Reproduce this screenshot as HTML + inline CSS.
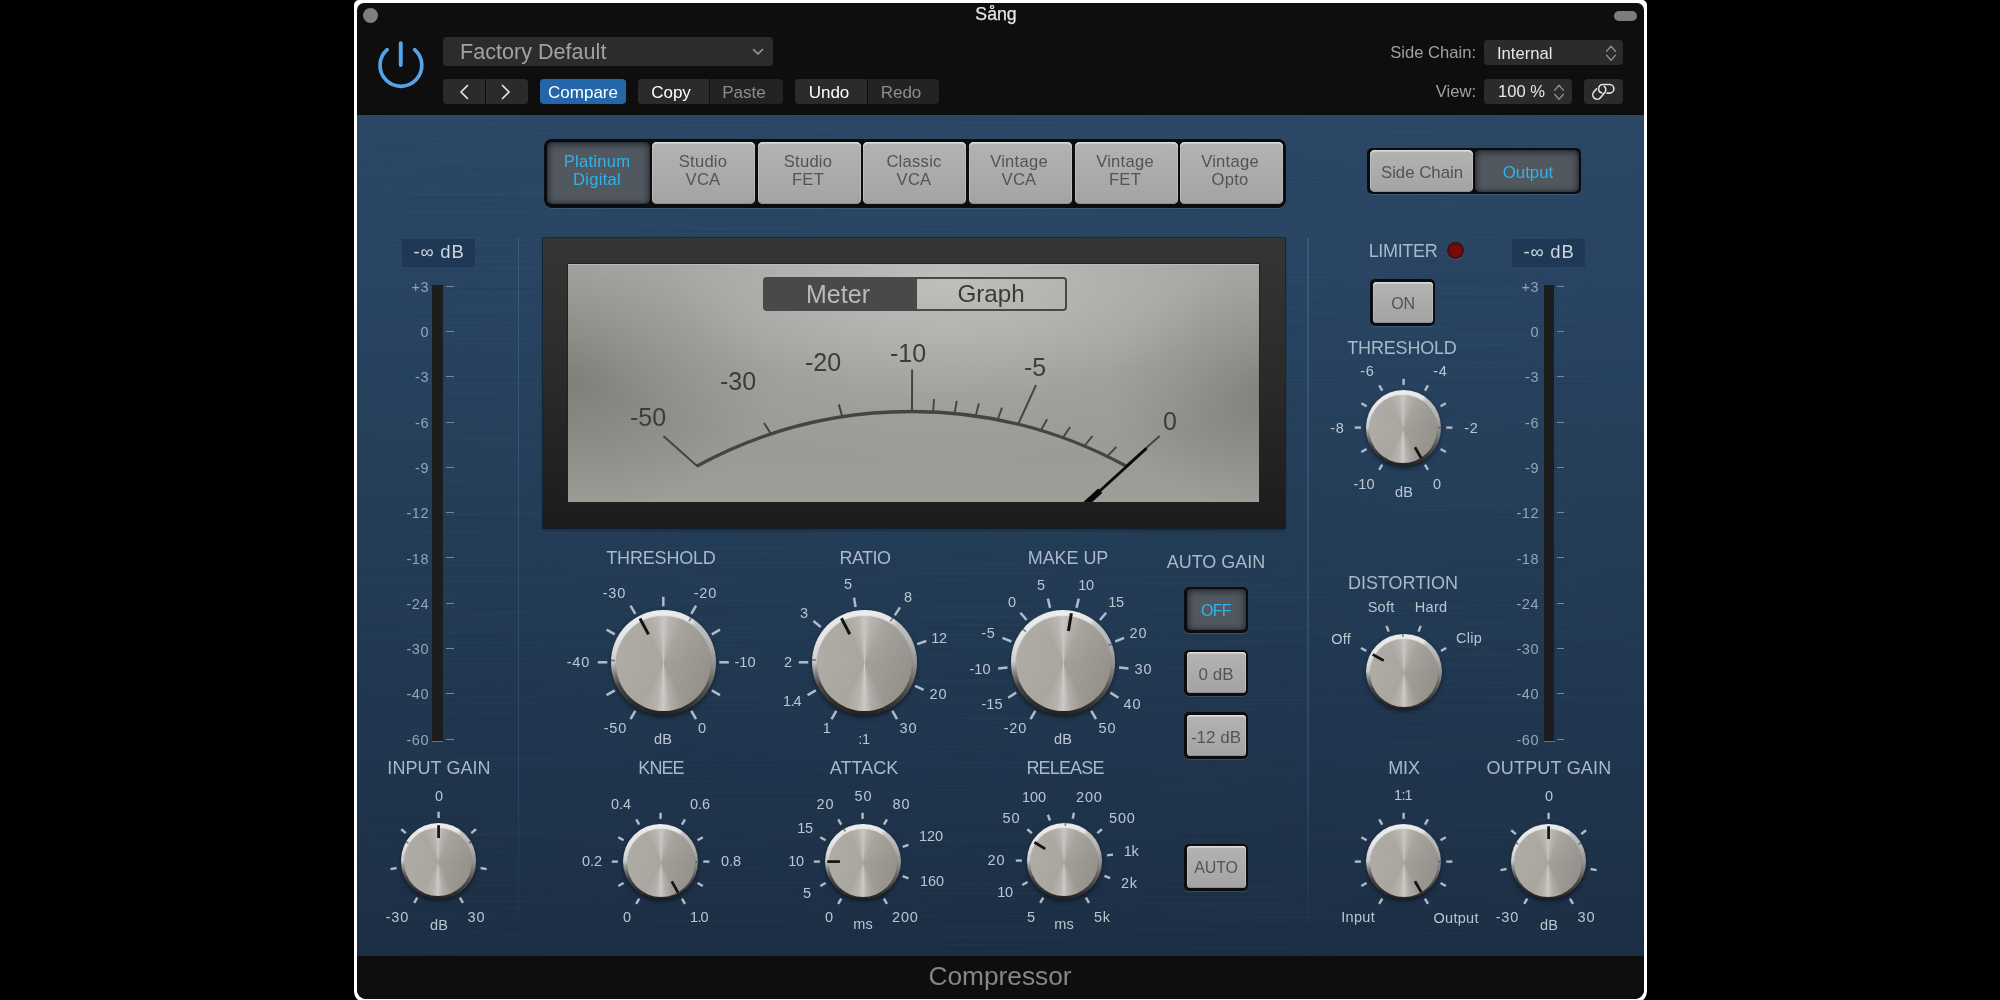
<!DOCTYPE html><html><head><meta charset="utf-8"><title>Compressor</title><style>
*{box-sizing:border-box;margin:0;padding:0}
html,body{width:2000px;height:1000px;overflow:hidden;background:#000}
body{font-family:"Liberation Sans",sans-serif;position:relative}
.abs{position:absolute}
.t{position:absolute;white-space:nowrap;transform:translate(-50%,-50%);line-height:1;will-change:transform}
.tr{position:absolute;white-space:nowrap;transform:translate(-100%,-50%);line-height:1;will-change:transform}
.tl{position:absolute;white-space:nowrap;transform:translate(0,-50%);line-height:1;will-change:transform}
#win{position:absolute;left:353.6px;top:0;width:1293.7px;height:1003px;background:#fff;border-radius:5px 5px 12px 12px}
#inner{position:absolute;left:357px;top:3px;width:1287.2px;height:996px;background:#0e0e0e;border-radius:7px 7px 9px 9px;overflow:hidden}
#panel{position:absolute;left:0;top:112px;width:1287px;height:841px;
 background:linear-gradient(180deg,#2b4765 0%,#284462 20%,#243d57 48%,#20364f 72%,#1c2e44 100%)}
.hb{position:absolute;background:#2b2b2b;border-radius:4px}
.lab{color:#a9b9c9}
.sc{color:#9fb1c4}
.mbtn{position:absolute;border-radius:5px;background:linear-gradient(180deg,#b3b3b3 0%,#ababab 50%,#a3a3a3 100%);
 box-shadow:inset 0 1.5px 0 #dedede, inset 0 -1px 0 #8e8e8e, inset 1px 0 0 #bcbcbc, inset -1px 0 0 #bcbcbc}
.mbtn.on{background:#51585f;box-shadow:inset 0 1px 7px 1px rgba(20,24,30,.75), inset 0 0 2px rgba(0,0,0,.5)}
.bt{color:#5a5a5a}
.bton{color:#2fb3ea}
</style></head><body>
<div id="win"></div><div id="inner">
<div id="panel"></div>
<svg class="abs" style="left:0;top:112px;mix-blend-mode:soft-light;opacity:.075" width="1288" height="841"><filter id="br" x="0" y="0" width="100%" height="100%" color-interpolation-filters="sRGB"><feTurbulence type="fractalNoise" baseFrequency="0.004 0.8" numOctaves="2" seed="7"/><feColorMatrix type="matrix" values="1.2 0 0 0 -0.1  1.2 0 0 0 -0.1  1.2 0 0 0 -0.1  0 0 0 0 1"/></filter><rect width="1288" height="841" filter="url(#br)"/></svg>
<div class="t" style="left:639.0px;top:12.0px;font-size:17.7px;color:#e6e6e6;-webkit-text-stroke:0.25px #e6e6e6">Sång</div>
<div class="abs" style="left:6.1px;top:5.1px;width:15.0px;height:15.0px;background:#7e7e7e;border-radius:50%"></div>
<div class="abs" style="left:1257.0px;top:8.0px;width:23.0px;height:10.0px;background:#7c7c7c;border-radius:5px"></div>
<svg class="abs" style="left:17.399999999999977px;top:32.8px" width="54" height="56" viewBox="0 0 54 56"><path d="M13.2 13.6 A20.9 20.9 0 1 0 40.6 13.6" fill="none" stroke="#55a3ea" stroke-width="3.7" stroke-linecap="round"/><path d="M26.75 7.3 V29.1" fill="none" stroke="#55a3ea" stroke-width="3.9" stroke-linecap="round"/></svg>
<div class="abs" style="left:86.0px;top:34.2px;width:330.0px;height:28.5px;background:#2c2c2c;border-radius:4px"></div>
<div class="tl" style="left:103.0px;top:49.0px;font-size:21.6px;color:#a2a2a2;">Factory Default</div>
<svg class="abs" style="left:394px;top:44px" width="14" height="10" viewBox="0 0 14 10"><path d="M2.5 2.5 L7 7 L11.5 2.5" fill="none" stroke="#9a9a9a" stroke-width="1.6" stroke-linecap="round" stroke-linejoin="round"/></svg>
<div class="abs" style="left:86.0px;top:76.0px;width:42.0px;height:25.0px;background:#2b2b2b;border-radius:4px 0 0 4px"></div>
<div class="abs" style="left:129.0px;top:76.0px;width:42.0px;height:25.0px;background:#2b2b2b;border-radius:0 4px 4px 0"></div>
<svg class="abs" style="left:100px;top:80px" width="14" height="18" viewBox="0 0 14 18"><path d="M10.5 2.5 L4 9 L10.5 15.5" fill="none" stroke="#e6e6e6" stroke-width="1.7" stroke-linecap="round" stroke-linejoin="round"/></svg>
<svg class="abs" style="left:142px;top:80px" width="14" height="18" viewBox="0 0 14 18"><path d="M3.5 2.5 L10 9 L3.5 15.5" fill="none" stroke="#e6e6e6" stroke-width="1.7" stroke-linecap="round" stroke-linejoin="round"/></svg>
<div class="abs" style="left:183.0px;top:76.0px;width:86.0px;height:25.0px;background:#2366a9;border-radius:4px"></div>
<div class="t" style="left:226.0px;top:88.9px;font-size:17px;color:#ffffff;">Compare</div>
<div class="abs" style="left:281.0px;top:76.0px;width:70.5px;height:25.0px;background:#2b2b2b;border-radius:4px 0 0 4px"></div>
<div class="abs" style="left:353.0px;top:76.0px;width:73.0px;height:25.0px;background:#232323;border-radius:0 4px 4px 0"></div>
<div class="t" style="left:313.5px;top:89.1px;font-size:17px;color:#ffffff;">Copy</div>
<div class="t" style="left:386.5px;top:89.1px;font-size:17px;color:#8d8d8d;">Paste</div>
<div class="abs" style="left:438.0px;top:76.0px;width:71.5px;height:25.0px;background:#2b2b2b;border-radius:4px 0 0 4px"></div>
<div class="abs" style="left:511.0px;top:76.0px;width:71.0px;height:25.0px;background:#232323;border-radius:0 4px 4px 0"></div>
<div class="t" style="left:471.5px;top:89.1px;font-size:17px;color:#ffffff;">Undo</div>
<div class="t" style="left:543.5px;top:89.1px;font-size:17px;color:#8d8d8d;">Redo</div>
<div class="tr" style="left:1119.0px;top:50.2px;font-size:16.6px;color:#a0a0a0;">Side Chain:</div>
<div class="abs" style="left:1127.0px;top:37.0px;width:139.0px;height:25.0px;background:#2b2b2b;border-radius:4px"></div>
<div class="tl" style="left:1140.3px;top:50.5px;font-size:16.6px;color:#e8e8e8;">Internal</div>
<svg class="abs" style="left:1246.6px;top:40.8px" width="14" height="18" viewBox="0 0 14 18"><path d="M2.6 7.2 L7 2.2 L11.4 7.2 M2.6 11.2 L7 16.2 L11.4 11.2" fill="none" stroke="#8f8f8f" stroke-width="1.3" stroke-linecap="round" stroke-linejoin="round"/></svg>
<div class="tr" style="left:1119.0px;top:88.6px;font-size:16.6px;color:#a0a0a0;">View:</div>
<div class="abs" style="left:1127.0px;top:76.0px;width:88.0px;height:25.0px;background:#2b2b2b;border-radius:4px"></div>
<div class="tl" style="left:1141.0px;top:88.6px;font-size:16.6px;color:#e8e8e8;">100 %</div>
<svg class="abs" style="left:1195.1px;top:79.8px" width="14" height="18" viewBox="0 0 14 18"><path d="M2.6 7.2 L7 2.2 L11.4 7.2 M2.6 11.2 L7 16.2 L11.4 11.2" fill="none" stroke="#8f8f8f" stroke-width="1.3" stroke-linecap="round" stroke-linejoin="round"/></svg>
<div class="abs" style="left:1226.5px;top:76.0px;width:39.5px;height:25.0px;background:#2b2b2b;border-radius:4px"></div>
<svg class="abs" style="left:1227px;top:76px" width="39" height="25" viewBox="1584 79 39 25"><g fill="none" stroke="#e4e4e4" stroke-width="1.55" stroke-linecap="round"><path d="M1607 93.1 L1609.55 93.1 A4.35 4.35 0 0 0 1609.55 84.4 L1602.95 84.4 A4.35 4.35 0 0 0 1601.9 92.97"/><path d="M1596.6 88.75 L1593.78 92.09 A4.35 4.35 0 0 0 1600.42 97.71 L1604.82 92.51 A4.35 4.35 0 0 0 1604.2 86.3"/></g></svg>
<div class="abs" style="left:0.0px;top:952.8px;width:1288.0px;height:44.2px;background:#0e0e0e"></div>
<div class="t" style="left:643.0px;top:973.0px;font-size:26.3px;color:#868686;">Compressor</div>
<div class="abs" style="left:187.0px;top:136.0px;width:741.5px;height:68.5px;background:#0a0c10;border-radius:8px;box-shadow:0 1px 0 rgba(120,150,180,.25)"></div>
<div class="mbtn on" style="left:190.0px;top:139.0px;width:103.0px;height:62.0px;"></div>
<div class="t" style="left:240.4px;top:158.7px;font-size:16.6px;color:#2fb3ea;letter-spacing:.25px">Platinum</div>
<div class="t" style="left:240.4px;top:176.7px;font-size:16.6px;color:#2fb3ea;letter-spacing:.25px">Digital</div>
<div class="mbtn" style="left:295.3px;top:139.0px;width:103.0px;height:62.0px;"></div>
<div class="t" style="left:345.7px;top:158.7px;font-size:16.6px;color:#545454;letter-spacing:.25px">Studio</div>
<div class="t" style="left:345.7px;top:176.7px;font-size:16.6px;color:#545454;letter-spacing:.25px">VCA</div>
<div class="mbtn" style="left:400.8px;top:139.0px;width:103.2px;height:62.0px;"></div>
<div class="t" style="left:451.3px;top:158.7px;font-size:16.6px;color:#545454;letter-spacing:.25px">Studio</div>
<div class="t" style="left:451.3px;top:176.7px;font-size:16.6px;color:#545454;letter-spacing:.25px">FET</div>
<div class="mbtn" style="left:506.4px;top:139.0px;width:103.1px;height:62.0px;"></div>
<div class="t" style="left:556.9px;top:158.7px;font-size:16.6px;color:#545454;letter-spacing:.25px">Classic</div>
<div class="t" style="left:556.9px;top:176.7px;font-size:16.6px;color:#545454;letter-spacing:.25px">VCA</div>
<div class="mbtn" style="left:612.0px;top:139.0px;width:102.8px;height:62.0px;"></div>
<div class="t" style="left:662.3px;top:158.7px;font-size:16.6px;color:#545454;letter-spacing:.25px">Vintage</div>
<div class="t" style="left:662.3px;top:176.7px;font-size:16.6px;color:#545454;letter-spacing:.25px">VCA</div>
<div class="mbtn" style="left:717.5px;top:139.0px;width:103.0px;height:62.0px;"></div>
<div class="t" style="left:767.9px;top:158.7px;font-size:16.6px;color:#545454;letter-spacing:.25px">Vintage</div>
<div class="t" style="left:767.9px;top:176.7px;font-size:16.6px;color:#545454;letter-spacing:.25px">FET</div>
<div class="mbtn" style="left:823.0px;top:139.0px;width:103.0px;height:62.0px;"></div>
<div class="t" style="left:873.4px;top:158.7px;font-size:16.6px;color:#545454;letter-spacing:.25px">Vintage</div>
<div class="t" style="left:873.4px;top:176.7px;font-size:16.6px;color:#545454;letter-spacing:.25px">Opto</div>
<div class="abs" style="left:1010.4px;top:145.3px;width:213.5px;height:45.5px;background:#0a0c10;border-radius:5px;box-shadow:0 1px 0 rgba(120,150,180,.25)"></div>
<div class="mbtn" style="left:1012.7px;top:147.3px;width:103.3px;height:41.4px;"></div>
<div class="mbtn on" style="left:1117.9px;top:147.3px;width:104.4px;height:41.4px;"></div>
<div class="t" style="left:1064.5px;top:170.0px;font-size:16.8px;color:#525252;">Side Chain</div>
<div class="t" style="left:1170.5px;top:170.0px;font-size:16.8px;color:#2fb3ea;">Output</div>
<div class="abs" style="left:160.8px;top:235.0px;width:1.4px;height:683.0px;background:linear-gradient(180deg,rgba(70,105,140,.6),rgba(60,90,125,.45) 80%,rgba(50,80,115,.1))"></div>
<div class="abs" style="left:950.3px;top:235.0px;width:1.4px;height:683.0px;background:linear-gradient(180deg,rgba(70,105,140,.6),rgba(60,90,125,.45) 80%,rgba(50,80,115,.1))"></div>
<div class="abs" style="left:44.5px;top:235.5px;width:73.5px;height:28.5px;background:#1f3855"></div>
<div class="t" style="left:81.8px;top:249.0px;font-size:18.5px;color:#ccd6df;letter-spacing:.8px">-∞ dB</div>
<div class="abs" style="left:75.3px;top:281.5px;width:10.7px;height:456.5px;background:#1d1d1d"></div>
<div class="abs" style="left:74.8px;top:738.0px;width:11.7px;height:1.0px;background:#5b7590"></div>
<div class="abs" style="left:89.0px;top:282.6px;width:7.5px;height:1.6px;background:#7189a3"></div>
<div class="tr" style="left:72.0px;top:283.9px;font-size:14.5px;color:#93a5b7;letter-spacing:0.5px">+3</div>
<div class="abs" style="left:89.0px;top:327.6px;width:7.5px;height:1.6px;background:#7189a3"></div>
<div class="tr" style="left:72.0px;top:329.2px;font-size:14.5px;color:#93a5b7;letter-spacing:0.5px">0</div>
<div class="abs" style="left:89.0px;top:372.6px;width:7.5px;height:1.6px;background:#7189a3"></div>
<div class="tr" style="left:72.0px;top:374.4px;font-size:14.5px;color:#93a5b7;letter-spacing:0.5px">-3</div>
<div class="abs" style="left:89.0px;top:418.6px;width:7.5px;height:1.6px;background:#7189a3"></div>
<div class="tr" style="left:72.0px;top:419.7px;font-size:14.5px;color:#93a5b7;letter-spacing:0.5px">-6</div>
<div class="abs" style="left:89.0px;top:463.6px;width:7.5px;height:1.6px;background:#7189a3"></div>
<div class="tr" style="left:72.0px;top:465.0px;font-size:14.5px;color:#93a5b7;letter-spacing:0.5px">-9</div>
<div class="abs" style="left:89.0px;top:508.6px;width:7.5px;height:1.6px;background:#7189a3"></div>
<div class="tr" style="left:72.0px;top:510.3px;font-size:14.5px;color:#93a5b7;letter-spacing:0.5px">-12</div>
<div class="abs" style="left:89.0px;top:553.6px;width:7.5px;height:1.6px;background:#7189a3"></div>
<div class="tr" style="left:72.0px;top:555.5px;font-size:14.5px;color:#93a5b7;letter-spacing:0.5px">-18</div>
<div class="abs" style="left:89.0px;top:599.6px;width:7.5px;height:1.6px;background:#7189a3"></div>
<div class="tr" style="left:72.0px;top:600.8px;font-size:14.5px;color:#93a5b7;letter-spacing:0.5px">-24</div>
<div class="abs" style="left:89.0px;top:644.6px;width:7.5px;height:1.6px;background:#7189a3"></div>
<div class="tr" style="left:72.0px;top:646.1px;font-size:14.5px;color:#93a5b7;letter-spacing:0.5px">-30</div>
<div class="abs" style="left:89.0px;top:689.6px;width:7.5px;height:1.6px;background:#7189a3"></div>
<div class="tr" style="left:72.0px;top:691.3px;font-size:14.5px;color:#93a5b7;letter-spacing:0.5px">-40</div>
<div class="abs" style="left:89.0px;top:735.6px;width:7.5px;height:1.6px;background:#7189a3"></div>
<div class="tr" style="left:72.0px;top:736.6px;font-size:14.5px;color:#93a5b7;letter-spacing:0.5px">-60</div>
<div class="abs" style="left:1155.0px;top:235.5px;width:73.0px;height:28.5px;background:#1f3855"></div>
<div class="t" style="left:1192.0px;top:249.0px;font-size:18.5px;color:#ccd6df;letter-spacing:.8px">-∞ dB</div>
<div class="abs" style="left:1187.3px;top:281.5px;width:10.0px;height:456.5px;background:#1d1d1d"></div>
<div class="abs" style="left:1186.8px;top:738.0px;width:11.0px;height:1.0px;background:#5b7590"></div>
<div class="abs" style="left:1199.5px;top:282.6px;width:7.3px;height:1.6px;background:#7189a3"></div>
<div class="tr" style="left:1182.0px;top:283.9px;font-size:14.5px;color:#93a5b7;letter-spacing:0.5px">+3</div>
<div class="abs" style="left:1199.5px;top:327.6px;width:7.3px;height:1.6px;background:#7189a3"></div>
<div class="tr" style="left:1182.0px;top:329.2px;font-size:14.5px;color:#93a5b7;letter-spacing:0.5px">0</div>
<div class="abs" style="left:1199.5px;top:372.6px;width:7.3px;height:1.6px;background:#7189a3"></div>
<div class="tr" style="left:1182.0px;top:374.4px;font-size:14.5px;color:#93a5b7;letter-spacing:0.5px">-3</div>
<div class="abs" style="left:1199.5px;top:418.6px;width:7.3px;height:1.6px;background:#7189a3"></div>
<div class="tr" style="left:1182.0px;top:419.7px;font-size:14.5px;color:#93a5b7;letter-spacing:0.5px">-6</div>
<div class="abs" style="left:1199.5px;top:463.6px;width:7.3px;height:1.6px;background:#7189a3"></div>
<div class="tr" style="left:1182.0px;top:465.0px;font-size:14.5px;color:#93a5b7;letter-spacing:0.5px">-9</div>
<div class="abs" style="left:1199.5px;top:508.6px;width:7.3px;height:1.6px;background:#7189a3"></div>
<div class="tr" style="left:1182.0px;top:510.3px;font-size:14.5px;color:#93a5b7;letter-spacing:0.5px">-12</div>
<div class="abs" style="left:1199.5px;top:553.6px;width:7.3px;height:1.6px;background:#7189a3"></div>
<div class="tr" style="left:1182.0px;top:555.5px;font-size:14.5px;color:#93a5b7;letter-spacing:0.5px">-18</div>
<div class="abs" style="left:1199.5px;top:599.6px;width:7.3px;height:1.6px;background:#7189a3"></div>
<div class="tr" style="left:1182.0px;top:600.8px;font-size:14.5px;color:#93a5b7;letter-spacing:0.5px">-24</div>
<div class="abs" style="left:1199.5px;top:644.6px;width:7.3px;height:1.6px;background:#7189a3"></div>
<div class="tr" style="left:1182.0px;top:646.1px;font-size:14.5px;color:#93a5b7;letter-spacing:0.5px">-30</div>
<div class="abs" style="left:1199.5px;top:689.6px;width:7.3px;height:1.6px;background:#7189a3"></div>
<div class="tr" style="left:1182.0px;top:691.3px;font-size:14.5px;color:#93a5b7;letter-spacing:0.5px">-40</div>
<div class="abs" style="left:1199.5px;top:735.6px;width:7.3px;height:1.6px;background:#7189a3"></div>
<div class="tr" style="left:1182.0px;top:736.6px;font-size:14.5px;color:#93a5b7;letter-spacing:0.5px">-60</div>
<div class="abs" style="left:186.0px;top:235.3px;width:741.5px;height:290.2px;background:linear-gradient(180deg,#353535 0%,#2a2a2a 50%,#1b1b1b 100%);box-shadow:0 0 0 1px rgba(10,20,35,.55), 0 2px 3px rgba(0,0,0,.35)"></div>
<div class="abs" style="left:211.0px;top:261.0px;width:691.0px;height:238.0px;background:radial-gradient(ellipse 62% 75% at 55% 8%,rgba(190,190,186,1) 0%,rgba(182,182,178,.85) 30%,rgba(170,170,166,.4) 65%,rgba(160,160,156,0) 100%),radial-gradient(ellipse 30% 55% at 0% 50%,rgba(128,128,123,1) 0%,rgba(128,128,123,0) 100%),radial-gradient(ellipse 22% 50% at 100% 52%,rgba(128,128,123,1) 0%,rgba(128,128,123,0) 100%),linear-gradient(180deg,#a4a4a0 0%,#999995 45%,#9b9b96 75%,#9e9e99 100%);overflow:hidden;box-shadow:inset 0 1px 0 #bcbcb8, 0 0 0 1px #222"></div>
<svg class="abs" style="left:211px;top:261px" width="691" height="238" viewBox="568 264 691 238"><path d="M697 466 A449.4 449.4 0 0 1 1126 466" fill="none" stroke="#444442" stroke-width="3.3"/><path d="M697.9 466.8 L663.4 436.1" stroke="#444442" stroke-width="2.0" fill="none"/><path d="M771.6 435.0 L764.1 423.0" stroke="#444442" stroke-width="2.0" fill="none"/><path d="M842.7 418.0 L838.8 404.4" stroke="#444442" stroke-width="2.0" fill="none"/><path d="M912.0 412.7 L912.1 369.5" stroke="#444442" stroke-width="2.0" fill="none"/><path d="M932.9 413.2 L934.1 399.1" stroke="#444442" stroke-width="1.9" fill="none"/><path d="M954.3 414.7 L956.8 400.8" stroke="#444442" stroke-width="1.9" fill="none"/><path d="M975.3 417.3 L978.9 403.5" stroke="#444442" stroke-width="1.9" fill="none"/><path d="M997.2 421.0 L1002.0 407.6" stroke="#444442" stroke-width="1.9" fill="none"/><path d="M1017.6 425.4 L1036.0 385.2" stroke="#444442" stroke-width="2.0" fill="none"/><path d="M1040.2 431.5 L1047.2 419.2" stroke="#444442" stroke-width="1.9" fill="none"/><path d="M1062.1 438.7 L1070.2 427.0" stroke="#444442" stroke-width="1.9" fill="none"/><path d="M1083.5 447.0 L1092.5 436.0" stroke="#444442" stroke-width="1.9" fill="none"/><path d="M1106.4 457.2 L1116.3 447.0" stroke="#444442" stroke-width="1.9" fill="none"/><path d="M1125.1 466.8 L1159.6 436.1" stroke="#444442" stroke-width="2.0" fill="none"/><path d="M1146.6 448.3 L1099.5 491.3" stroke="#080808" stroke-width="2.9" fill="none"/><path d="M1100.2 490.7 L1085 504.6" stroke="#080808" stroke-width="6" fill="none"/></svg>
<div class="t" style="left:291.0px;top:414.0px;font-size:25px;color:#3c3c3a;">-50</div>
<div class="t" style="left:380.5px;top:377.5px;font-size:25px;color:#3c3c3a;">-30</div>
<div class="t" style="left:466.0px;top:358.5px;font-size:25px;color:#3c3c3a;">-20</div>
<div class="t" style="left:550.5px;top:350.0px;font-size:25px;color:#3c3c3a;">-10</div>
<div class="t" style="left:677.5px;top:364.0px;font-size:25px;color:#3c3c3a;">-5</div>
<div class="t" style="left:812.5px;top:418.0px;font-size:25px;color:#3c3c3a;">0</div>
<div class="abs" style="left:406.0px;top:273.5px;width:153.0px;height:34.0px;background:#494949;border-radius:4px 0 0 4px"></div>
<div class="abs" style="left:557.5px;top:273.5px;width:152.0px;height:34.0px;border:2px solid #494949;border-radius:0 4px 4px 0"></div>
<div class="t" style="left:481.0px;top:290.5px;font-size:25px;color:#b9b9b7;">Meter</div>
<div class="t" style="left:633.5px;top:290.5px;font-size:24.2px;color:#3a3a38;">Graph</div>
<div class="abs" style="left:255.1px;top:610.2px;width:102.6px;height:103.6px;border-radius:50%;background:rgba(6,9,16,.7);filter:blur(2.5px)"></div>
<div class="abs" style="left:254.1px;top:607.2px;width:104.6px;height:104.6px;border-radius:50%;background:conic-gradient(from 0deg,#ededed 0deg,#e6e6e6 32deg,#c2c2c2 40deg,#b2b2b2 68deg,#8e8c8a 95deg,#565452 120deg,#32302e 150deg,#242220 180deg,#2e2c2a 215deg,#484644 242deg,#868482 258deg,#cfcfcf 272deg,#e6e6e6 300deg,#ededed 360deg)"></div>
<div class="abs" style="left:258.7px;top:612.9px;width:95.4px;height:95.4px;border-radius:50%;background:linear-gradient(115deg,rgba(255,255,255,.07) 10%,rgba(255,255,255,0) 50%,rgba(0,0,0,.09) 90%),conic-gradient(from 0deg,#c9c6c2 0deg,#b5b1ac 9deg,#a7a39d 26deg,#a29e98 90deg,#a4a09a 152deg,#b6b2ad 170deg,#d2cfcb 180deg,#b8b4af 190deg,#a9a59f 208deg,#aaa6a0 270deg,#a8a49e 334deg,#b5b1ac 351deg,#c9c6c2 360deg);box-shadow:0 0 1px rgba(60,58,56,.6)"></div>
<svg class="abs" style="left:240.1px;top:593.2px" width="132.6" height="132.6" viewBox="-66.3 -66.3 132.6 132.6"><path d="M-28.00 48.50 L-32.75 56.72" stroke="#adbccb" stroke-width="2.5" fill="none"/><path d="M-48.50 28.00 L-56.72 32.75" stroke="#adbccb" stroke-width="2.5" fill="none"/><path d="M-56.00 -0.00 L-65.50 -0.00" stroke="#adbccb" stroke-width="2.5" fill="none"/><path d="M-48.50 -28.00 L-56.72 -32.75" stroke="#adbccb" stroke-width="2.5" fill="none"/><path d="M-28.00 -48.50 L-32.75 -56.72" stroke="#adbccb" stroke-width="2.5" fill="none"/><path d="M0.00 -56.00 L0.00 -65.50" stroke="#adbccb" stroke-width="2.5" fill="none"/><path d="M28.00 -48.50 L32.75 -56.72" stroke="#adbccb" stroke-width="2.5" fill="none"/><path d="M48.50 -28.00 L56.72 -32.75" stroke="#adbccb" stroke-width="2.5" fill="none"/><path d="M56.00 -0.00 L65.50 -0.00" stroke="#adbccb" stroke-width="2.5" fill="none"/><path d="M48.50 28.00 L56.72 32.75" stroke="#adbccb" stroke-width="2.5" fill="none"/><path d="M28.00 48.50 L32.75 56.72" stroke="#adbccb" stroke-width="2.5" fill="none"/><path d="M25.60 -40.96 L28.03 -44.86" stroke="rgba(60,66,76,.6)" stroke-width="1.7" fill="none"/><path d="M-48.27 -1.69 L-52.87 -1.85" stroke="rgba(60,66,76,.6)" stroke-width="1.7" fill="none"/><path d="M-23.29 -43.79 L-14.84 -27.90" stroke="#15120f" stroke-width="3.0" fill="none"/></svg>
<div class="t" style="left:304.0px;top:554.5px;font-size:18px;color:#a9b9c9;letter-spacing:-0.18px">THRESHOLD</div>
<div class="t" style="left:257.0px;top:589.6px;font-size:14.5px;color:#bbc6d1;letter-spacing:0.8px;padding-left:0.8px">-30</div>
<div class="t" style="left:348.0px;top:589.6px;font-size:14.5px;color:#bbc6d1;letter-spacing:0.8px;padding-left:0.8px">-20</div>
<div class="t" style="left:221.0px;top:658.6px;font-size:14.5px;color:#bbc6d1;letter-spacing:0.8px;padding-left:0.8px">-40</div>
<div class="t" style="left:388.0px;top:658.6px;font-size:14.5px;color:#bbc6d1;letter-spacing:0.0px;padding-left:0.0px">-10</div>
<div class="t" style="left:258.0px;top:724.6px;font-size:14.5px;color:#bbc6d1;letter-spacing:0.8px;padding-left:0.8px">-50</div>
<div class="t" style="left:345.0px;top:724.6px;font-size:14.5px;color:#bbc6d1;letter-spacing:0.8px;padding-left:0.8px">0</div>
<div class="t" style="left:306.0px;top:735.6px;font-size:14.5px;color:#bbc6d1;letter-spacing:0.3px;padding-left:0.3px">dB</div>
<div class="abs" style="left:456.2px;top:610.3px;width:102.6px;height:103.6px;border-radius:50%;background:rgba(6,9,16,.7);filter:blur(2.5px)"></div>
<div class="abs" style="left:455.2px;top:607.3px;width:104.6px;height:104.6px;border-radius:50%;background:conic-gradient(from 0deg,#ededed 0deg,#e6e6e6 32deg,#c2c2c2 40deg,#b2b2b2 68deg,#8e8c8a 95deg,#565452 120deg,#32302e 150deg,#242220 180deg,#2e2c2a 215deg,#484644 242deg,#868482 258deg,#cfcfcf 272deg,#e6e6e6 300deg,#ededed 360deg)"></div>
<div class="abs" style="left:459.8px;top:613.0px;width:95.4px;height:95.4px;border-radius:50%;background:linear-gradient(115deg,rgba(255,255,255,.07) 10%,rgba(255,255,255,0) 50%,rgba(0,0,0,.09) 90%),conic-gradient(from 0deg,#c9c6c2 0deg,#b5b1ac 9deg,#a7a39d 26deg,#a29e98 90deg,#a4a09a 152deg,#b6b2ad 170deg,#d2cfcb 180deg,#b8b4af 190deg,#a9a59f 208deg,#aaa6a0 270deg,#a8a49e 334deg,#b5b1ac 351deg,#c9c6c2 360deg);box-shadow:0 0 1px rgba(60,58,56,.6)"></div>
<svg class="abs" style="left:441.2px;top:593.3px" width="132.6" height="132.6" viewBox="-66.3 -66.3 132.6 132.6"><path d="M-28.00 48.50 L-32.75 56.72" stroke="#adbccb" stroke-width="2.5" fill="none"/><path d="M-48.50 28.00 L-56.72 32.75" stroke="#adbccb" stroke-width="2.5" fill="none"/><path d="M-56.00 -0.00 L-65.50 -0.00" stroke="#adbccb" stroke-width="2.5" fill="none"/><path d="M-43.52 -35.24 L-50.90 -41.22" stroke="#adbccb" stroke-width="2.5" fill="none"/><path d="M-8.76 -55.31 L-10.25 -64.69" stroke="#adbccb" stroke-width="2.5" fill="none"/><path d="M30.50 -46.97 L35.67 -54.93" stroke="#adbccb" stroke-width="2.5" fill="none"/><path d="M52.95 -18.23 L61.93 -21.32" stroke="#adbccb" stroke-width="2.5" fill="none"/><path d="M50.75 23.67 L59.36 27.68" stroke="#adbccb" stroke-width="2.5" fill="none"/><path d="M28.00 48.50 L32.75 56.72" stroke="#adbccb" stroke-width="2.5" fill="none"/><path d="M26.02 -40.69 L28.50 -44.57" stroke="rgba(60,66,76,.6)" stroke-width="1.7" fill="none"/><path d="M-48.25 -2.19 L-52.85 -2.40" stroke="rgba(60,66,76,.6)" stroke-width="1.7" fill="none"/><path d="M-22.83 -44.04 L-14.54 -28.05" stroke="#15120f" stroke-width="3.0" fill="none"/></svg>
<div class="t" style="left:508.0px;top:554.5px;font-size:18px;color:#a9b9c9;letter-spacing:-0.5px">RATIO</div>
<div class="t" style="left:491.0px;top:580.6px;font-size:14.5px;color:#bbc6d1;letter-spacing:0.8px;padding-left:0.8px">5</div>
<div class="t" style="left:550.5px;top:593.6px;font-size:14.5px;color:#bbc6d1;letter-spacing:0.8px;padding-left:0.8px">8</div>
<div class="t" style="left:446.5px;top:609.6px;font-size:14.5px;color:#bbc6d1;letter-spacing:0.8px;padding-left:0.8px">3</div>
<div class="t" style="left:582.0px;top:634.6px;font-size:14.5px;color:#bbc6d1;letter-spacing:-0.4px;padding-left:-0.4px">12</div>
<div class="t" style="left:431.0px;top:658.6px;font-size:14.5px;color:#bbc6d1;letter-spacing:0.8px;padding-left:0.8px">2</div>
<div class="t" style="left:581.0px;top:690.6px;font-size:14.5px;color:#bbc6d1;letter-spacing:0.8px;padding-left:0.8px">20</div>
<div class="t" style="left:435.0px;top:697.6px;font-size:14.5px;color:#bbc6d1;letter-spacing:-0.8px;padding-left:-0.8px">1.4</div>
<div class="t" style="left:468.5px;top:725.1px;font-size:14.5px;color:#bbc6d1;letter-spacing:-1.6px;padding-left:-1.6px">1</div>
<div class="t" style="left:550.5px;top:724.6px;font-size:14.5px;color:#bbc6d1;letter-spacing:0.8px;padding-left:0.8px">30</div>
<div class="t" style="left:507.0px;top:736.1px;font-size:14.5px;color:#bbc6d1;letter-spacing:-0.4px;padding-left:-0.4px">:1</div>
<div class="abs" style="left:654.9px;top:610.3px;width:102.6px;height:103.6px;border-radius:50%;background:rgba(6,9,16,.7);filter:blur(2.5px)"></div>
<div class="abs" style="left:653.9px;top:607.3px;width:104.6px;height:104.6px;border-radius:50%;background:conic-gradient(from 0deg,#ededed 0deg,#e6e6e6 32deg,#c2c2c2 40deg,#b2b2b2 68deg,#8e8c8a 95deg,#565452 120deg,#32302e 150deg,#242220 180deg,#2e2c2a 215deg,#484644 242deg,#868482 258deg,#cfcfcf 272deg,#e6e6e6 300deg,#ededed 360deg)"></div>
<div class="abs" style="left:658.5px;top:613.0px;width:95.4px;height:95.4px;border-radius:50%;background:linear-gradient(115deg,rgba(255,255,255,.07) 10%,rgba(255,255,255,0) 50%,rgba(0,0,0,.09) 90%),conic-gradient(from 0deg,#c9c6c2 0deg,#b5b1ac 9deg,#a7a39d 26deg,#a29e98 90deg,#a4a09a 152deg,#b6b2ad 170deg,#d2cfcb 180deg,#b8b4af 190deg,#a9a59f 208deg,#aaa6a0 270deg,#a8a49e 334deg,#b5b1ac 351deg,#c9c6c2 360deg);box-shadow:0 0 1px rgba(60,58,56,.6)"></div>
<svg class="abs" style="left:639.9px;top:593.3px" width="132.6" height="132.6" viewBox="-66.3 -66.3 132.6 132.6"><path d="M-28.00 48.50 L-32.75 56.72" stroke="#adbccb" stroke-width="2.5" fill="none"/><path d="M-47.11 30.28 L-55.10 35.41" stroke="#adbccb" stroke-width="2.5" fill="none"/><path d="M-55.75 5.32 L-65.20 6.23" stroke="#adbccb" stroke-width="2.5" fill="none"/><path d="M-51.99 -20.81 L-60.81 -24.34" stroke="#adbccb" stroke-width="2.5" fill="none"/><path d="M-36.67 -42.32 L-42.89 -49.50" stroke="#adbccb" stroke-width="2.5" fill="none"/><path d="M-13.20 -54.42 L-15.44 -63.65" stroke="#adbccb" stroke-width="2.5" fill="none"/><path d="M13.20 -54.42 L15.44 -63.65" stroke="#adbccb" stroke-width="2.5" fill="none"/><path d="M36.67 -42.32 L42.89 -49.50" stroke="#adbccb" stroke-width="2.5" fill="none"/><path d="M51.99 -20.81 L60.81 -24.34" stroke="#adbccb" stroke-width="2.5" fill="none"/><path d="M55.75 5.32 L65.20 6.23" stroke="#adbccb" stroke-width="2.5" fill="none"/><path d="M47.11 30.28 L55.10 35.41" stroke="#adbccb" stroke-width="2.5" fill="none"/><path d="M28.00 48.50 L32.75 56.72" stroke="#adbccb" stroke-width="2.5" fill="none"/><path d="M45.21 -16.99 L49.52 -18.61" stroke="rgba(60,66,76,.6)" stroke-width="1.7" fill="none"/><path d="M-37.32 -30.66 L-40.88 -33.58" stroke="rgba(60,66,76,.6)" stroke-width="1.7" fill="none"/><path d="M8.10 -48.93 L5.16 -31.18" stroke="#15120f" stroke-width="3.0" fill="none"/></svg>
<div class="t" style="left:711.0px;top:554.5px;font-size:18px;color:#a9b9c9;letter-spacing:-0.08px">MAKE UP</div>
<div class="t" style="left:684.0px;top:581.6px;font-size:14.5px;color:#bbc6d1;letter-spacing:0.8px;padding-left:0.8px">5</div>
<div class="t" style="left:729.0px;top:581.6px;font-size:14.5px;color:#bbc6d1;letter-spacing:-0.4px;padding-left:-0.4px">10</div>
<div class="t" style="left:654.5px;top:599.1px;font-size:14.5px;color:#bbc6d1;letter-spacing:0.8px;padding-left:0.8px">0</div>
<div class="t" style="left:759.0px;top:599.1px;font-size:14.5px;color:#bbc6d1;letter-spacing:-0.4px;padding-left:-0.4px">15</div>
<div class="t" style="left:631.0px;top:629.6px;font-size:14.5px;color:#bbc6d1;letter-spacing:0.8px;padding-left:0.8px">-5</div>
<div class="t" style="left:781.0px;top:629.6px;font-size:14.5px;color:#bbc6d1;letter-spacing:0.8px;padding-left:0.8px">20</div>
<div class="t" style="left:622.5px;top:665.6px;font-size:14.5px;color:#bbc6d1;letter-spacing:0.0px;padding-left:0.0px">-10</div>
<div class="t" style="left:786.0px;top:665.6px;font-size:14.5px;color:#bbc6d1;letter-spacing:0.8px;padding-left:0.8px">30</div>
<div class="t" style="left:634.5px;top:700.6px;font-size:14.5px;color:#bbc6d1;letter-spacing:0.0px;padding-left:0.0px">-15</div>
<div class="t" style="left:774.5px;top:700.6px;font-size:14.5px;color:#bbc6d1;letter-spacing:0.8px;padding-left:0.8px">40</div>
<div class="t" style="left:657.5px;top:724.6px;font-size:14.5px;color:#bbc6d1;letter-spacing:0.8px;padding-left:0.8px">-20</div>
<div class="t" style="left:750.0px;top:724.6px;font-size:14.5px;color:#bbc6d1;letter-spacing:0.8px;padding-left:0.8px">50</div>
<div class="t" style="left:705.5px;top:735.6px;font-size:14.5px;color:#bbc6d1;letter-spacing:0.3px;padding-left:0.3px">dB</div>
<div class="t" style="left:859.0px;top:558.5px;font-size:18px;color:#a9b9c9;letter-spacing:0px">AUTO GAIN</div>
<div class="abs" style="left:267.0px;top:824.0px;width:73.2px;height:74.2px;border-radius:50%;background:rgba(6,9,16,.7);filter:blur(2.5px)"></div>
<div class="abs" style="left:266.0px;top:821.0px;width:75.2px;height:75.2px;border-radius:50%;background:conic-gradient(from 0deg,#ededed 0deg,#e6e6e6 32deg,#c2c2c2 40deg,#b2b2b2 68deg,#8e8c8a 95deg,#565452 120deg,#32302e 150deg,#242220 180deg,#2e2c2a 215deg,#484644 242deg,#868482 258deg,#cfcfcf 272deg,#e6e6e6 300deg,#ededed 360deg)"></div>
<div class="abs" style="left:269.5px;top:825.8px;width:68.2px;height:68.2px;border-radius:50%;background:linear-gradient(115deg,rgba(255,255,255,.07) 10%,rgba(255,255,255,0) 50%,rgba(0,0,0,.09) 90%),conic-gradient(from 0deg,#c9c6c2 0deg,#b5b1ac 9deg,#a7a39d 26deg,#a29e98 90deg,#a4a09a 152deg,#b6b2ad 170deg,#d2cfcb 180deg,#b8b4af 190deg,#a9a59f 208deg,#aaa6a0 270deg,#a8a49e 334deg,#b5b1ac 351deg,#c9c6c2 360deg);box-shadow:0 0 1px rgba(60,58,56,.6)"></div>
<svg class="abs" style="left:252.0px;top:807.0px" width="103.2" height="103.2" viewBox="-51.6 -51.6 103.2 103.2"><path d="M-21.35 36.98 L-24.40 42.26" stroke="#adbccb" stroke-width="2.4" fill="none"/><path d="M-36.98 21.35 L-42.26 24.40" stroke="#adbccb" stroke-width="2.4" fill="none"/><path d="M-42.70 -0.00 L-48.80 -0.00" stroke="#adbccb" stroke-width="2.4" fill="none"/><path d="M-36.98 -21.35 L-42.26 -24.40" stroke="#adbccb" stroke-width="2.4" fill="none"/><path d="M-21.35 -36.98 L-24.40 -42.26" stroke="#adbccb" stroke-width="2.4" fill="none"/><path d="M0.00 -42.70 L0.00 -48.80" stroke="#adbccb" stroke-width="2.4" fill="none"/><path d="M21.35 -36.98 L24.40 -42.26" stroke="#adbccb" stroke-width="2.4" fill="none"/><path d="M36.98 -21.35 L42.26 -24.40" stroke="#adbccb" stroke-width="2.4" fill="none"/><path d="M42.70 -0.00 L48.80 -0.00" stroke="#adbccb" stroke-width="2.4" fill="none"/><path d="M36.98 21.35 L42.26 24.40" stroke="#adbccb" stroke-width="2.4" fill="none"/><path d="M21.35 36.98 L24.40 42.26" stroke="#adbccb" stroke-width="2.4" fill="none"/><path d="M-17.61 29.90 L-19.39 32.91" stroke="rgba(60,66,76,.6)" stroke-width="1.7" fill="none"/><path d="M34.70 0.30 L38.20 0.33" stroke="rgba(60,66,76,.6)" stroke-width="1.7" fill="none"/><path d="M17.38 30.72 L11.18 19.76" stroke="#15120f" stroke-width="2.7" fill="none"/></svg>
<div class="t" style="left:304.0px;top:764.5px;font-size:18px;color:#a9b9c9;letter-spacing:-0.9px">KNEE</div>
<div class="t" style="left:264.0px;top:800.6px;font-size:14.5px;color:#bbc6d1;letter-spacing:0.0px;padding-left:0.0px">0.4</div>
<div class="t" style="left:343.0px;top:800.6px;font-size:14.5px;color:#bbc6d1;letter-spacing:0.0px;padding-left:0.0px">0.6</div>
<div class="t" style="left:235.0px;top:857.6px;font-size:14.5px;color:#bbc6d1;letter-spacing:0.0px;padding-left:0.0px">0.2</div>
<div class="t" style="left:373.5px;top:857.6px;font-size:14.5px;color:#bbc6d1;letter-spacing:0.0px;padding-left:0.0px">0.8</div>
<div class="t" style="left:270.0px;top:913.6px;font-size:14.5px;color:#bbc6d1;letter-spacing:0.8px;padding-left:0.8px">0</div>
<div class="t" style="left:342.0px;top:913.6px;font-size:14.5px;color:#bbc6d1;letter-spacing:-0.8px;padding-left:-0.8px">1.0</div>
<div class="abs" style="left:469.4px;top:824.0px;width:73.2px;height:74.2px;border-radius:50%;background:rgba(6,9,16,.7);filter:blur(2.5px)"></div>
<div class="abs" style="left:468.4px;top:821.0px;width:75.2px;height:75.2px;border-radius:50%;background:conic-gradient(from 0deg,#ededed 0deg,#e6e6e6 32deg,#c2c2c2 40deg,#b2b2b2 68deg,#8e8c8a 95deg,#565452 120deg,#32302e 150deg,#242220 180deg,#2e2c2a 215deg,#484644 242deg,#868482 258deg,#cfcfcf 272deg,#e6e6e6 300deg,#ededed 360deg)"></div>
<div class="abs" style="left:471.9px;top:825.8px;width:68.2px;height:68.2px;border-radius:50%;background:linear-gradient(115deg,rgba(255,255,255,.07) 10%,rgba(255,255,255,0) 50%,rgba(0,0,0,.09) 90%),conic-gradient(from 0deg,#c9c6c2 0deg,#b5b1ac 9deg,#a7a39d 26deg,#a29e98 90deg,#a4a09a 152deg,#b6b2ad 170deg,#d2cfcb 180deg,#b8b4af 190deg,#a9a59f 208deg,#aaa6a0 270deg,#a8a49e 334deg,#b5b1ac 351deg,#c9c6c2 360deg);box-shadow:0 0 1px rgba(60,58,56,.6)"></div>
<svg class="abs" style="left:454.4px;top:807.0px" width="103.2" height="103.2" viewBox="-51.6 -51.6 103.2 103.2"><path d="M-21.35 36.98 L-24.40 42.26" stroke="#adbccb" stroke-width="2.4" fill="none"/><path d="M-36.98 21.35 L-42.26 24.40" stroke="#adbccb" stroke-width="2.4" fill="none"/><path d="M-42.70 -0.00 L-48.80 -0.00" stroke="#adbccb" stroke-width="2.4" fill="none"/><path d="M-36.98 -21.35 L-42.26 -24.40" stroke="#adbccb" stroke-width="2.4" fill="none"/><path d="M-21.35 -36.98 L-24.40 -42.26" stroke="#adbccb" stroke-width="2.4" fill="none"/><path d="M0.00 -42.70 L0.00 -48.80" stroke="#adbccb" stroke-width="2.4" fill="none"/><path d="M21.35 -36.98 L24.40 -42.26" stroke="#adbccb" stroke-width="2.4" fill="none"/><path d="M40.12 -14.60 L45.86 -16.69" stroke="#adbccb" stroke-width="2.4" fill="none"/><path d="M40.12 14.60 L45.86 16.69" stroke="#adbccb" stroke-width="2.4" fill="none"/><path d="M21.35 36.98 L24.40 42.26" stroke="#adbccb" stroke-width="2.4" fill="none"/><path d="M-17.35 -30.05 L-19.10 -33.08" stroke="rgba(60,66,76,.6)" stroke-width="1.7" fill="none"/><path d="M-17.35 30.05 L-19.10 33.08" stroke="rgba(60,66,76,.6)" stroke-width="1.7" fill="none"/><path d="M-35.30 -0.00 L-22.70 -0.00" stroke="#15120f" stroke-width="2.7" fill="none"/></svg>
<div class="t" style="left:507.0px;top:764.5px;font-size:18px;color:#a9b9c9;letter-spacing:0px">ATTACK</div>
<div class="t" style="left:467.5px;top:800.6px;font-size:14.5px;color:#bbc6d1;letter-spacing:0.8px;padding-left:0.8px">20</div>
<div class="t" style="left:506.0px;top:792.6px;font-size:14.5px;color:#bbc6d1;letter-spacing:0.8px;padding-left:0.8px">50</div>
<div class="t" style="left:543.5px;top:800.6px;font-size:14.5px;color:#bbc6d1;letter-spacing:0.8px;padding-left:0.8px">80</div>
<div class="t" style="left:448.0px;top:824.6px;font-size:14.5px;color:#bbc6d1;letter-spacing:-0.4px;padding-left:-0.4px">15</div>
<div class="t" style="left:573.5px;top:832.6px;font-size:14.5px;color:#bbc6d1;letter-spacing:0.0px;padding-left:0.0px">120</div>
<div class="t" style="left:439.0px;top:857.6px;font-size:14.5px;color:#bbc6d1;letter-spacing:-0.4px;padding-left:-0.4px">10</div>
<div class="t" style="left:574.5px;top:877.6px;font-size:14.5px;color:#bbc6d1;letter-spacing:0.0px;padding-left:0.0px">160</div>
<div class="t" style="left:450.0px;top:889.6px;font-size:14.5px;color:#bbc6d1;letter-spacing:0.8px;padding-left:0.8px">5</div>
<div class="t" style="left:472.0px;top:913.6px;font-size:14.5px;color:#bbc6d1;letter-spacing:0.8px;padding-left:0.8px">0</div>
<div class="t" style="left:505.5px;top:920.6px;font-size:14.5px;color:#bbc6d1;letter-spacing:0.3px;padding-left:0.3px">ms</div>
<div class="t" style="left:548.0px;top:913.6px;font-size:14.5px;color:#bbc6d1;letter-spacing:0.8px;padding-left:0.8px">200</div>
<div class="abs" style="left:670.8px;top:823.4px;width:73.2px;height:74.2px;border-radius:50%;background:rgba(6,9,16,.7);filter:blur(2.5px)"></div>
<div class="abs" style="left:669.8px;top:820.4px;width:75.2px;height:75.2px;border-radius:50%;background:conic-gradient(from 0deg,#ededed 0deg,#e6e6e6 32deg,#c2c2c2 40deg,#b2b2b2 68deg,#8e8c8a 95deg,#565452 120deg,#32302e 150deg,#242220 180deg,#2e2c2a 215deg,#484644 242deg,#868482 258deg,#cfcfcf 272deg,#e6e6e6 300deg,#ededed 360deg)"></div>
<div class="abs" style="left:673.3px;top:825.2px;width:68.2px;height:68.2px;border-radius:50%;background:linear-gradient(115deg,rgba(255,255,255,.07) 10%,rgba(255,255,255,0) 50%,rgba(0,0,0,.09) 90%),conic-gradient(from 0deg,#c9c6c2 0deg,#b5b1ac 9deg,#a7a39d 26deg,#a29e98 90deg,#a4a09a 152deg,#b6b2ad 170deg,#d2cfcb 180deg,#b8b4af 190deg,#a9a59f 208deg,#aaa6a0 270deg,#a8a49e 334deg,#b5b1ac 351deg,#c9c6c2 360deg);box-shadow:0 0 1px rgba(60,58,56,.6)"></div>
<svg class="abs" style="left:655.8px;top:806.4px" width="103.2" height="103.2" viewBox="-51.6 -51.6 103.2 103.2"><path d="M-21.35 36.98 L-24.40 42.26" stroke="#adbccb" stroke-width="2.4" fill="none"/><path d="M-36.98 21.35 L-42.26 24.40" stroke="#adbccb" stroke-width="2.4" fill="none"/><path d="M-42.70 -0.00 L-48.80 -0.00" stroke="#adbccb" stroke-width="2.4" fill="none"/><path d="M-32.71 -27.45 L-37.38 -31.37" stroke="#adbccb" stroke-width="2.4" fill="none"/><path d="M-14.60 -40.12 L-16.69 -45.86" stroke="#adbccb" stroke-width="2.4" fill="none"/><path d="M8.15 -41.92 L9.31 -47.90" stroke="#adbccb" stroke-width="2.4" fill="none"/><path d="M32.71 -27.45 L37.38 -31.37" stroke="#adbccb" stroke-width="2.4" fill="none"/><path d="M42.38 -5.20 L48.44 -5.95" stroke="#adbccb" stroke-width="2.4" fill="none"/><path d="M39.86 15.30 L45.56 17.49" stroke="#adbccb" stroke-width="2.4" fill="none"/><path d="M21.35 36.98 L24.40 42.26" stroke="#adbccb" stroke-width="2.4" fill="none"/><path d="M0.79 -34.69 L0.87 -38.19" stroke="rgba(60,66,76,.6)" stroke-width="1.7" fill="none"/><path d="M-30.44 16.66 L-33.51 18.34" stroke="rgba(60,66,76,.6)" stroke-width="1.7" fill="none"/><path d="M-30.16 -18.34 L-19.40 -11.79" stroke="#15120f" stroke-width="2.7" fill="none"/></svg>
<div class="t" style="left:708.0px;top:764.5px;font-size:18px;color:#a9b9c9;letter-spacing:-0.85px">RELEASE</div>
<div class="t" style="left:677.0px;top:793.6px;font-size:14.5px;color:#bbc6d1;letter-spacing:0.0px;padding-left:0.0px">100</div>
<div class="t" style="left:731.5px;top:793.6px;font-size:14.5px;color:#bbc6d1;letter-spacing:0.8px;padding-left:0.8px">200</div>
<div class="t" style="left:654.0px;top:814.6px;font-size:14.5px;color:#bbc6d1;letter-spacing:0.8px;padding-left:0.8px">50</div>
<div class="t" style="left:765.0px;top:814.6px;font-size:14.5px;color:#bbc6d1;letter-spacing:0.8px;padding-left:0.8px">500</div>
<div class="t" style="left:773.5px;top:847.6px;font-size:14.5px;color:#bbc6d1;letter-spacing:-0.4px;padding-left:-0.4px">1k</div>
<div class="t" style="left:639.0px;top:856.6px;font-size:14.5px;color:#bbc6d1;letter-spacing:0.8px;padding-left:0.8px">20</div>
<div class="t" style="left:771.5px;top:879.6px;font-size:14.5px;color:#bbc6d1;letter-spacing:0.8px;padding-left:0.8px">2k</div>
<div class="t" style="left:648.0px;top:888.6px;font-size:14.5px;color:#bbc6d1;letter-spacing:-0.4px;padding-left:-0.4px">10</div>
<div class="t" style="left:674.0px;top:913.6px;font-size:14.5px;color:#bbc6d1;letter-spacing:0.8px;padding-left:0.8px">5</div>
<div class="t" style="left:707.0px;top:920.6px;font-size:14.5px;color:#bbc6d1;letter-spacing:0.3px;padding-left:0.3px">ms</div>
<div class="t" style="left:744.5px;top:913.6px;font-size:14.5px;color:#bbc6d1;letter-spacing:0.8px;padding-left:0.8px">5k</div>
<div class="abs" style="left:44.7px;top:823.4px;width:73.2px;height:74.2px;border-radius:50%;background:rgba(6,9,16,.7);filter:blur(2.5px)"></div>
<div class="abs" style="left:43.7px;top:820.4px;width:75.2px;height:75.2px;border-radius:50%;background:conic-gradient(from 0deg,#ededed 0deg,#e6e6e6 32deg,#c2c2c2 40deg,#b2b2b2 68deg,#8e8c8a 95deg,#565452 120deg,#32302e 150deg,#242220 180deg,#2e2c2a 215deg,#484644 242deg,#868482 258deg,#cfcfcf 272deg,#e6e6e6 300deg,#ededed 360deg)"></div>
<div class="abs" style="left:47.2px;top:825.2px;width:68.2px;height:68.2px;border-radius:50%;background:linear-gradient(115deg,rgba(255,255,255,.07) 10%,rgba(255,255,255,0) 50%,rgba(0,0,0,.09) 90%),conic-gradient(from 0deg,#c9c6c2 0deg,#b5b1ac 9deg,#a7a39d 26deg,#a29e98 90deg,#a4a09a 152deg,#b6b2ad 170deg,#d2cfcb 180deg,#b8b4af 190deg,#a9a59f 208deg,#aaa6a0 270deg,#a8a49e 334deg,#b5b1ac 351deg,#c9c6c2 360deg);box-shadow:0 0 1px rgba(60,58,56,.6)"></div>
<svg class="abs" style="left:29.7px;top:806.4px" width="103.2" height="103.2" viewBox="-51.6 -51.6 103.2 103.2"><path d="M-21.35 36.98 L-24.40 42.26" stroke="#adbccb" stroke-width="2.4" fill="none"/><path d="M-42.05 7.41 L-48.06 8.47" stroke="#adbccb" stroke-width="2.4" fill="none"/><path d="M-32.71 -27.45 L-37.38 -31.37" stroke="#adbccb" stroke-width="2.4" fill="none"/><path d="M0.00 -42.70 L0.00 -48.80" stroke="#adbccb" stroke-width="2.4" fill="none"/><path d="M32.71 -27.45 L37.38 -31.37" stroke="#adbccb" stroke-width="2.4" fill="none"/><path d="M42.05 7.41 L48.06 8.47" stroke="#adbccb" stroke-width="2.4" fill="none"/><path d="M21.35 36.98 L24.40 42.26" stroke="#adbccb" stroke-width="2.4" fill="none"/><path d="M30.05 -17.35 L33.08 -19.10" stroke="rgba(60,66,76,.6)" stroke-width="1.7" fill="none"/><path d="M-30.05 -17.35 L-33.08 -19.10" stroke="rgba(60,66,76,.6)" stroke-width="1.7" fill="none"/><path d="M0.00 -35.30 L0.00 -22.70" stroke="#15120f" stroke-width="2.7" fill="none"/></svg>
<div class="t" style="left:82.0px;top:764.5px;font-size:18px;color:#a9b9c9;letter-spacing:0.06px">INPUT GAIN</div>
<div class="t" style="left:81.5px;top:792.6px;font-size:14.5px;color:#bbc6d1;letter-spacing:0.8px;padding-left:0.8px">0</div>
<div class="t" style="left:40.0px;top:913.6px;font-size:14.5px;color:#bbc6d1;letter-spacing:0.8px;padding-left:0.8px">-30</div>
<div class="t" style="left:119.0px;top:913.6px;font-size:14.5px;color:#bbc6d1;letter-spacing:0.8px;padding-left:0.8px">30</div>
<div class="t" style="left:81.5px;top:921.6px;font-size:14.5px;color:#bbc6d1;letter-spacing:0.3px;padding-left:0.3px">dB</div>
<div class="t" style="left:1046.0px;top:248.0px;font-size:18px;color:#a9b9c9;letter-spacing:-0.33px">LIMITER</div>
<div class="abs" style="left:1090.0px;top:238.5px;width:17.0px;height:17.0px;border-radius:50%;background:radial-gradient(circle at 50% 50%,#7c0b0b 0%,#740a0a 48%,#4a0a0c 62%,#241018 78%,#1a1a24 100%);box-shadow:0 1px 0 rgba(120,150,180,.3)"></div>
<div class="t" style="left:1045.0px;top:344.5px;font-size:18px;color:#a9b9c9;letter-spacing:-0.18px">THRESHOLD</div>
<div class="abs" style="left:1009.8px;top:390.4px;width:73.2px;height:74.2px;border-radius:50%;background:rgba(6,9,16,.7);filter:blur(2.5px)"></div>
<div class="abs" style="left:1008.8px;top:387.4px;width:75.2px;height:75.2px;border-radius:50%;background:conic-gradient(from 0deg,#ededed 0deg,#e6e6e6 32deg,#c2c2c2 40deg,#b2b2b2 68deg,#8e8c8a 95deg,#565452 120deg,#32302e 150deg,#242220 180deg,#2e2c2a 215deg,#484644 242deg,#868482 258deg,#cfcfcf 272deg,#e6e6e6 300deg,#ededed 360deg)"></div>
<div class="abs" style="left:1012.3px;top:392.2px;width:68.2px;height:68.2px;border-radius:50%;background:linear-gradient(115deg,rgba(255,255,255,.07) 10%,rgba(255,255,255,0) 50%,rgba(0,0,0,.09) 90%),conic-gradient(from 0deg,#c9c6c2 0deg,#b5b1ac 9deg,#a7a39d 26deg,#a29e98 90deg,#a4a09a 152deg,#b6b2ad 170deg,#d2cfcb 180deg,#b8b4af 190deg,#a9a59f 208deg,#aaa6a0 270deg,#a8a49e 334deg,#b5b1ac 351deg,#c9c6c2 360deg);box-shadow:0 0 1px rgba(60,58,56,.6)"></div>
<svg class="abs" style="left:994.8px;top:373.4px" width="103.2" height="103.2" viewBox="-51.6 -51.6 103.2 103.2"><path d="M-21.35 36.98 L-24.40 42.26" stroke="#adbccb" stroke-width="2.4" fill="none"/><path d="M-36.98 21.35 L-42.26 24.40" stroke="#adbccb" stroke-width="2.4" fill="none"/><path d="M-42.70 -0.00 L-48.80 -0.00" stroke="#adbccb" stroke-width="2.4" fill="none"/><path d="M-36.98 -21.35 L-42.26 -24.40" stroke="#adbccb" stroke-width="2.4" fill="none"/><path d="M-21.35 -36.98 L-24.40 -42.26" stroke="#adbccb" stroke-width="2.4" fill="none"/><path d="M0.00 -42.70 L0.00 -48.80" stroke="#adbccb" stroke-width="2.4" fill="none"/><path d="M21.35 -36.98 L24.40 -42.26" stroke="#adbccb" stroke-width="2.4" fill="none"/><path d="M36.98 -21.35 L42.26 -24.40" stroke="#adbccb" stroke-width="2.4" fill="none"/><path d="M42.70 -0.00 L48.80 -0.00" stroke="#adbccb" stroke-width="2.4" fill="none"/><path d="M36.98 21.35 L42.26 24.40" stroke="#adbccb" stroke-width="2.4" fill="none"/><path d="M21.35 36.98 L24.40 42.26" stroke="#adbccb" stroke-width="2.4" fill="none"/><path d="M-17.35 30.05 L-19.10 33.08" stroke="rgba(60,66,76,.6)" stroke-width="1.7" fill="none"/><path d="M34.70 -0.00 L38.20 -0.00" stroke="rgba(60,66,76,.6)" stroke-width="1.7" fill="none"/><path d="M17.65 30.57 L11.35 19.66" stroke="#15120f" stroke-width="2.7" fill="none"/></svg>
<div class="t" style="left:1010.0px;top:367.6px;font-size:14.5px;color:#bbc6d1;letter-spacing:0.8px;padding-left:0.8px">-6</div>
<div class="t" style="left:1082.5px;top:367.6px;font-size:14.5px;color:#bbc6d1;letter-spacing:0.8px;padding-left:0.8px">-4</div>
<div class="t" style="left:979.5px;top:424.6px;font-size:14.5px;color:#bbc6d1;letter-spacing:0.8px;padding-left:0.8px">-8</div>
<div class="t" style="left:1114.0px;top:424.6px;font-size:14.5px;color:#bbc6d1;letter-spacing:0.8px;padding-left:0.8px">-2</div>
<div class="t" style="left:1007.0px;top:480.6px;font-size:14.5px;color:#bbc6d1;letter-spacing:0.0px;padding-left:0.0px">-10</div>
<div class="t" style="left:1080.0px;top:480.6px;font-size:14.5px;color:#bbc6d1;letter-spacing:0.8px;padding-left:0.8px">0</div>
<div class="t" style="left:1047.0px;top:488.6px;font-size:14.5px;color:#bbc6d1;letter-spacing:0.3px;padding-left:0.3px">dB</div>
<div class="t" style="left:1046.0px;top:579.5px;font-size:18px;color:#a9b9c9;letter-spacing:-0.04px">DISTORTION</div>
<div class="abs" style="left:1010.4px;top:633.7px;width:73.2px;height:74.2px;border-radius:50%;background:rgba(6,9,16,.7);filter:blur(2.5px)"></div>
<div class="abs" style="left:1009.4px;top:630.7px;width:75.2px;height:75.2px;border-radius:50%;background:conic-gradient(from 0deg,#ededed 0deg,#e6e6e6 32deg,#c2c2c2 40deg,#b2b2b2 68deg,#8e8c8a 95deg,#565452 120deg,#32302e 150deg,#242220 180deg,#2e2c2a 215deg,#484644 242deg,#868482 258deg,#cfcfcf 272deg,#e6e6e6 300deg,#ededed 360deg)"></div>
<div class="abs" style="left:1012.9px;top:635.5px;width:68.2px;height:68.2px;border-radius:50%;background:linear-gradient(115deg,rgba(255,255,255,.07) 10%,rgba(255,255,255,0) 50%,rgba(0,0,0,.09) 90%),conic-gradient(from 0deg,#c9c6c2 0deg,#b5b1ac 9deg,#a7a39d 26deg,#a29e98 90deg,#a4a09a 152deg,#b6b2ad 170deg,#d2cfcb 180deg,#b8b4af 190deg,#a9a59f 208deg,#aaa6a0 270deg,#a8a49e 334deg,#b5b1ac 351deg,#c9c6c2 360deg);box-shadow:0 0 1px rgba(60,58,56,.6)"></div>
<svg class="abs" style="left:995.4px;top:616.7px" width="103.2" height="103.2" viewBox="-51.6 -51.6 103.2 103.2"><path d="M-37.35 -20.70 L-42.68 -23.66" stroke="#adbccb" stroke-width="2.4" fill="none"/><path d="M-14.95 -40.00 L-17.09 -45.71" stroke="#adbccb" stroke-width="2.4" fill="none"/><path d="M14.95 -40.00 L17.09 -45.71" stroke="#adbccb" stroke-width="2.4" fill="none"/><path d="M37.35 -20.70 L42.68 -23.66" stroke="#adbccb" stroke-width="2.4" fill="none"/><path d="M-0.61 -34.69 L-0.67 -38.19" stroke="rgba(60,66,76,.6)" stroke-width="1.7" fill="none"/><path d="M-29.74 17.87 L-32.74 19.67" stroke="rgba(60,66,76,.6)" stroke-width="1.7" fill="none"/><path d="M-30.87 -17.11 L-19.85 -11.01" stroke="#15120f" stroke-width="2.7" fill="none"/></svg>
<div class="t" style="left:984.0px;top:635.5px;font-size:14.5px;color:#bbc6d1;letter-spacing:0.3px;padding-left:0.3px">Off</div>
<div class="t" style="left:1024.0px;top:603.5px;font-size:14.5px;color:#bbc6d1;letter-spacing:0.3px;padding-left:0.3px">Soft</div>
<div class="t" style="left:1074.0px;top:603.5px;font-size:14.5px;color:#bbc6d1;letter-spacing:0.3px;padding-left:0.3px">Hard</div>
<div class="t" style="left:1111.5px;top:634.5px;font-size:14.5px;color:#bbc6d1;letter-spacing:0.3px;padding-left:0.3px">Clip</div>
<div class="t" style="left:1047.0px;top:764.5px;font-size:18px;color:#a9b9c9;letter-spacing:-0.15px">MIX</div>
<div class="abs" style="left:1010.0px;top:823.9px;width:73.2px;height:74.2px;border-radius:50%;background:rgba(6,9,16,.7);filter:blur(2.5px)"></div>
<div class="abs" style="left:1009.0px;top:820.9px;width:75.2px;height:75.2px;border-radius:50%;background:conic-gradient(from 0deg,#ededed 0deg,#e6e6e6 32deg,#c2c2c2 40deg,#b2b2b2 68deg,#8e8c8a 95deg,#565452 120deg,#32302e 150deg,#242220 180deg,#2e2c2a 215deg,#484644 242deg,#868482 258deg,#cfcfcf 272deg,#e6e6e6 300deg,#ededed 360deg)"></div>
<div class="abs" style="left:1012.5px;top:825.7px;width:68.2px;height:68.2px;border-radius:50%;background:linear-gradient(115deg,rgba(255,255,255,.07) 10%,rgba(255,255,255,0) 50%,rgba(0,0,0,.09) 90%),conic-gradient(from 0deg,#c9c6c2 0deg,#b5b1ac 9deg,#a7a39d 26deg,#a29e98 90deg,#a4a09a 152deg,#b6b2ad 170deg,#d2cfcb 180deg,#b8b4af 190deg,#a9a59f 208deg,#aaa6a0 270deg,#a8a49e 334deg,#b5b1ac 351deg,#c9c6c2 360deg);box-shadow:0 0 1px rgba(60,58,56,.6)"></div>
<svg class="abs" style="left:995.0px;top:806.9px" width="103.2" height="103.2" viewBox="-51.6 -51.6 103.2 103.2"><path d="M-21.35 36.98 L-24.40 42.26" stroke="#adbccb" stroke-width="2.4" fill="none"/><path d="M-36.98 21.35 L-42.26 24.40" stroke="#adbccb" stroke-width="2.4" fill="none"/><path d="M-42.70 -0.00 L-48.80 -0.00" stroke="#adbccb" stroke-width="2.4" fill="none"/><path d="M-36.98 -21.35 L-42.26 -24.40" stroke="#adbccb" stroke-width="2.4" fill="none"/><path d="M-21.35 -36.98 L-24.40 -42.26" stroke="#adbccb" stroke-width="2.4" fill="none"/><path d="M0.00 -42.70 L0.00 -48.80" stroke="#adbccb" stroke-width="2.4" fill="none"/><path d="M21.35 -36.98 L24.40 -42.26" stroke="#adbccb" stroke-width="2.4" fill="none"/><path d="M36.98 -21.35 L42.26 -24.40" stroke="#adbccb" stroke-width="2.4" fill="none"/><path d="M42.70 -0.00 L48.80 -0.00" stroke="#adbccb" stroke-width="2.4" fill="none"/><path d="M36.98 21.35 L42.26 24.40" stroke="#adbccb" stroke-width="2.4" fill="none"/><path d="M21.35 36.98 L24.40 42.26" stroke="#adbccb" stroke-width="2.4" fill="none"/><path d="M-17.35 30.05 L-19.10 33.08" stroke="rgba(60,66,76,.6)" stroke-width="1.7" fill="none"/><path d="M34.70 -0.00 L38.20 -0.00" stroke="rgba(60,66,76,.6)" stroke-width="1.7" fill="none"/><path d="M17.65 30.57 L11.35 19.66" stroke="#15120f" stroke-width="2.7" fill="none"/></svg>
<div class="t" style="left:1046.0px;top:791.6px;font-size:14.5px;color:#bbc6d1;letter-spacing:-0.8px;padding-left:-0.8px">1:1</div>
<div class="t" style="left:1000.5px;top:914.0px;font-size:14.5px;color:#bbc6d1;letter-spacing:0.3px;padding-left:0.3px">Input</div>
<div class="t" style="left:1099.0px;top:914.5px;font-size:14.5px;color:#bbc6d1;letter-spacing:0.3px;padding-left:0.3px">Output</div>
<div class="t" style="left:1192.0px;top:764.5px;font-size:18px;color:#a9b9c9;letter-spacing:0.21px">OUTPUT GAIN</div>
<div class="abs" style="left:1154.7px;top:823.9px;width:73.2px;height:74.2px;border-radius:50%;background:rgba(6,9,16,.7);filter:blur(2.5px)"></div>
<div class="abs" style="left:1153.7px;top:820.9px;width:75.2px;height:75.2px;border-radius:50%;background:conic-gradient(from 0deg,#ededed 0deg,#e6e6e6 32deg,#c2c2c2 40deg,#b2b2b2 68deg,#8e8c8a 95deg,#565452 120deg,#32302e 150deg,#242220 180deg,#2e2c2a 215deg,#484644 242deg,#868482 258deg,#cfcfcf 272deg,#e6e6e6 300deg,#ededed 360deg)"></div>
<div class="abs" style="left:1157.2px;top:825.7px;width:68.2px;height:68.2px;border-radius:50%;background:linear-gradient(115deg,rgba(255,255,255,.07) 10%,rgba(255,255,255,0) 50%,rgba(0,0,0,.09) 90%),conic-gradient(from 0deg,#c9c6c2 0deg,#b5b1ac 9deg,#a7a39d 26deg,#a29e98 90deg,#a4a09a 152deg,#b6b2ad 170deg,#d2cfcb 180deg,#b8b4af 190deg,#a9a59f 208deg,#aaa6a0 270deg,#a8a49e 334deg,#b5b1ac 351deg,#c9c6c2 360deg);box-shadow:0 0 1px rgba(60,58,56,.6)"></div>
<svg class="abs" style="left:1139.7px;top:806.9px" width="103.2" height="103.2" viewBox="-51.6 -51.6 103.2 103.2"><path d="M-21.35 36.98 L-24.40 42.26" stroke="#adbccb" stroke-width="2.4" fill="none"/><path d="M-42.05 7.41 L-48.06 8.47" stroke="#adbccb" stroke-width="2.4" fill="none"/><path d="M-32.71 -27.45 L-37.38 -31.37" stroke="#adbccb" stroke-width="2.4" fill="none"/><path d="M0.00 -42.70 L0.00 -48.80" stroke="#adbccb" stroke-width="2.4" fill="none"/><path d="M32.71 -27.45 L37.38 -31.37" stroke="#adbccb" stroke-width="2.4" fill="none"/><path d="M42.05 7.41 L48.06 8.47" stroke="#adbccb" stroke-width="2.4" fill="none"/><path d="M21.35 36.98 L24.40 42.26" stroke="#adbccb" stroke-width="2.4" fill="none"/><path d="M30.05 -17.35 L33.08 -19.10" stroke="rgba(60,66,76,.6)" stroke-width="1.7" fill="none"/><path d="M-30.05 -17.35 L-33.08 -19.10" stroke="rgba(60,66,76,.6)" stroke-width="1.7" fill="none"/><path d="M0.00 -35.30 L0.00 -22.70" stroke="#15120f" stroke-width="2.7" fill="none"/></svg>
<div class="t" style="left:1191.5px;top:792.6px;font-size:14.5px;color:#bbc6d1;letter-spacing:0.8px;padding-left:0.8px">0</div>
<div class="t" style="left:1150.0px;top:913.6px;font-size:14.5px;color:#bbc6d1;letter-spacing:0.8px;padding-left:0.8px">-30</div>
<div class="t" style="left:1229.0px;top:913.6px;font-size:14.5px;color:#bbc6d1;letter-spacing:0.8px;padding-left:0.8px">30</div>
<div class="t" style="left:1191.5px;top:921.6px;font-size:14.5px;color:#bbc6d1;letter-spacing:0.3px;padding-left:0.3px">dB</div>
<div class="abs" style="left:827.2px;top:583.8px;width:64.3px;height:46.4px;background:#0a0c10;border-radius:5px;box-shadow:0 1px 0 rgba(120,150,180,.25)"></div>
<div class="mbtn on" style="left:829.5px;top:586.3px;width:59.7px;height:40.7px;border-radius:4px"></div>
<div class="t" style="left:859.3px;top:608.1px;font-size:16px;color:#2fb3ea;letter-spacing:-0.7px">OFF</div>
<div class="abs" style="left:827.2px;top:646.5px;width:64.3px;height:46.7px;background:#0a0c10;border-radius:5px;box-shadow:0 1px 0 rgba(120,150,180,.25)"></div>
<div class="mbtn" style="left:829.5px;top:649.0px;width:59.7px;height:41.0px;border-radius:4px"></div>
<div class="t" style="left:859.3px;top:671.0px;font-size:17px;color:#545454;letter-spacing:0px">0 dB</div>
<div class="abs" style="left:827.2px;top:709.2px;width:64.3px;height:46.8px;background:#0a0c10;border-radius:5px;box-shadow:0 1px 0 rgba(120,150,180,.25)"></div>
<div class="mbtn" style="left:829.5px;top:711.7px;width:59.7px;height:41.1px;border-radius:4px"></div>
<div class="t" style="left:859.3px;top:733.8px;font-size:17px;color:#545454;letter-spacing:0px">-12 dB</div>
<div class="abs" style="left:827.2px;top:840.5px;width:64.3px;height:47.2px;background:#0a0c10;border-radius:5px;box-shadow:0 1px 0 rgba(120,150,180,.25)"></div>
<div class="mbtn" style="left:829.5px;top:843.0px;width:59.7px;height:41.5px;border-radius:4px"></div>
<div class="t" style="left:859.3px;top:865.2px;font-size:16px;color:#545454;letter-spacing:-0.2px">AUTO</div>
<div class="abs" style="left:1013.2px;top:276.2px;width:65.3px;height:47.0px;background:#0a0c10;border-radius:5px;box-shadow:0 1px 0 rgba(120,150,180,.25)"></div>
<div class="mbtn" style="left:1015.5px;top:278.7px;width:60.7px;height:41.3px;border-radius:4px"></div>
<div class="t" style="left:1045.8px;top:300.9px;font-size:16px;color:#545454;letter-spacing:-0.3px">ON</div>
</div></body></html>
